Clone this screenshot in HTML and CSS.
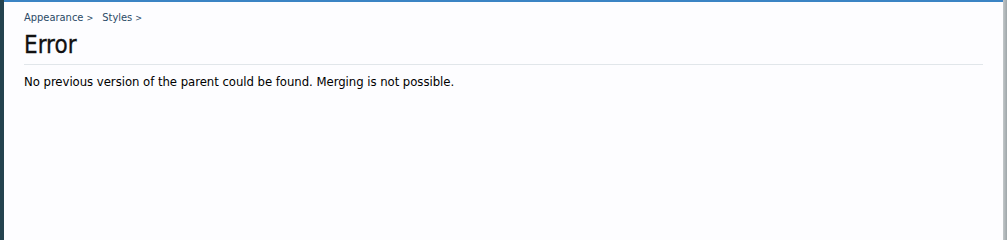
FILE: index.html
```html
<!DOCTYPE html>
<html>
<head>
<meta charset="utf-8">
<link rel="stylesheet" href="styles.css">
</head>
<body>
<div class="frame">
  <div class="side"></div>
  <div class="main">
    <div class="content">
      <nav class="crumbs">
        <a class="crumb" href="#">Appearance</a><span class="arrow">&gt;</span>
        <a class="crumb" href="#">Styles</a><span class="arrow">&gt;</span>
      </nav>
      <h1 class="title">Error</h1>
      <p class="message">No previous version of the parent could be found. Merging is not possible.</p>
    </div>
  </div>
  <div class="scroll"></div>
</div>
</body>
</html>
```
FILE: styles.css
```css
html, body {
  margin: 0;
  padding: 0;
  overflow: hidden;
}
body {
  font-family: "DejaVu Sans Condensed", "DejaVu Sans", sans-serif;
  background: #fdfdff;
  color: #000;
}
.frame {
  display: flex;
  height: 100vh;
}
.side {
  width: 4px;
  background: #24434f;
  flex: none;
}
.main {
  flex: 1;
  border-top: 2px solid #3b84c4;
  background: #fdfdff;
}
.scroll {
  width: 4px;
  flex: none;
  background: linear-gradient(to right, #c3c8ca, #9ea6a9);
}
.content {
  margin: 0 20px;
  padding-top: 9px;
}
.crumbs {
  font-size: 11px;
  line-height: 14px;
  display: flex;
  align-items: baseline;
}
.crumb {
  color: #2b4a66;
  text-decoration: none;
}
.arrow {
  font-size: 9px;
  color: #2b4a66;
  margin: 0 9px 0 3px;
}
.title {
  font-size: 24px;
  font-weight: normal;
  margin: 5px 0 0;
  padding-bottom: 4px;
  line-height: 30px;
  border-bottom: 1px solid #e1e6ea;
  color: #111;
  -webkit-text-stroke: 0.3px #111;
}
.message {
  font-size: 13px;
  letter-spacing: -0.04px;
  margin: 9px 0 0;
  line-height: 16px;
}
```
